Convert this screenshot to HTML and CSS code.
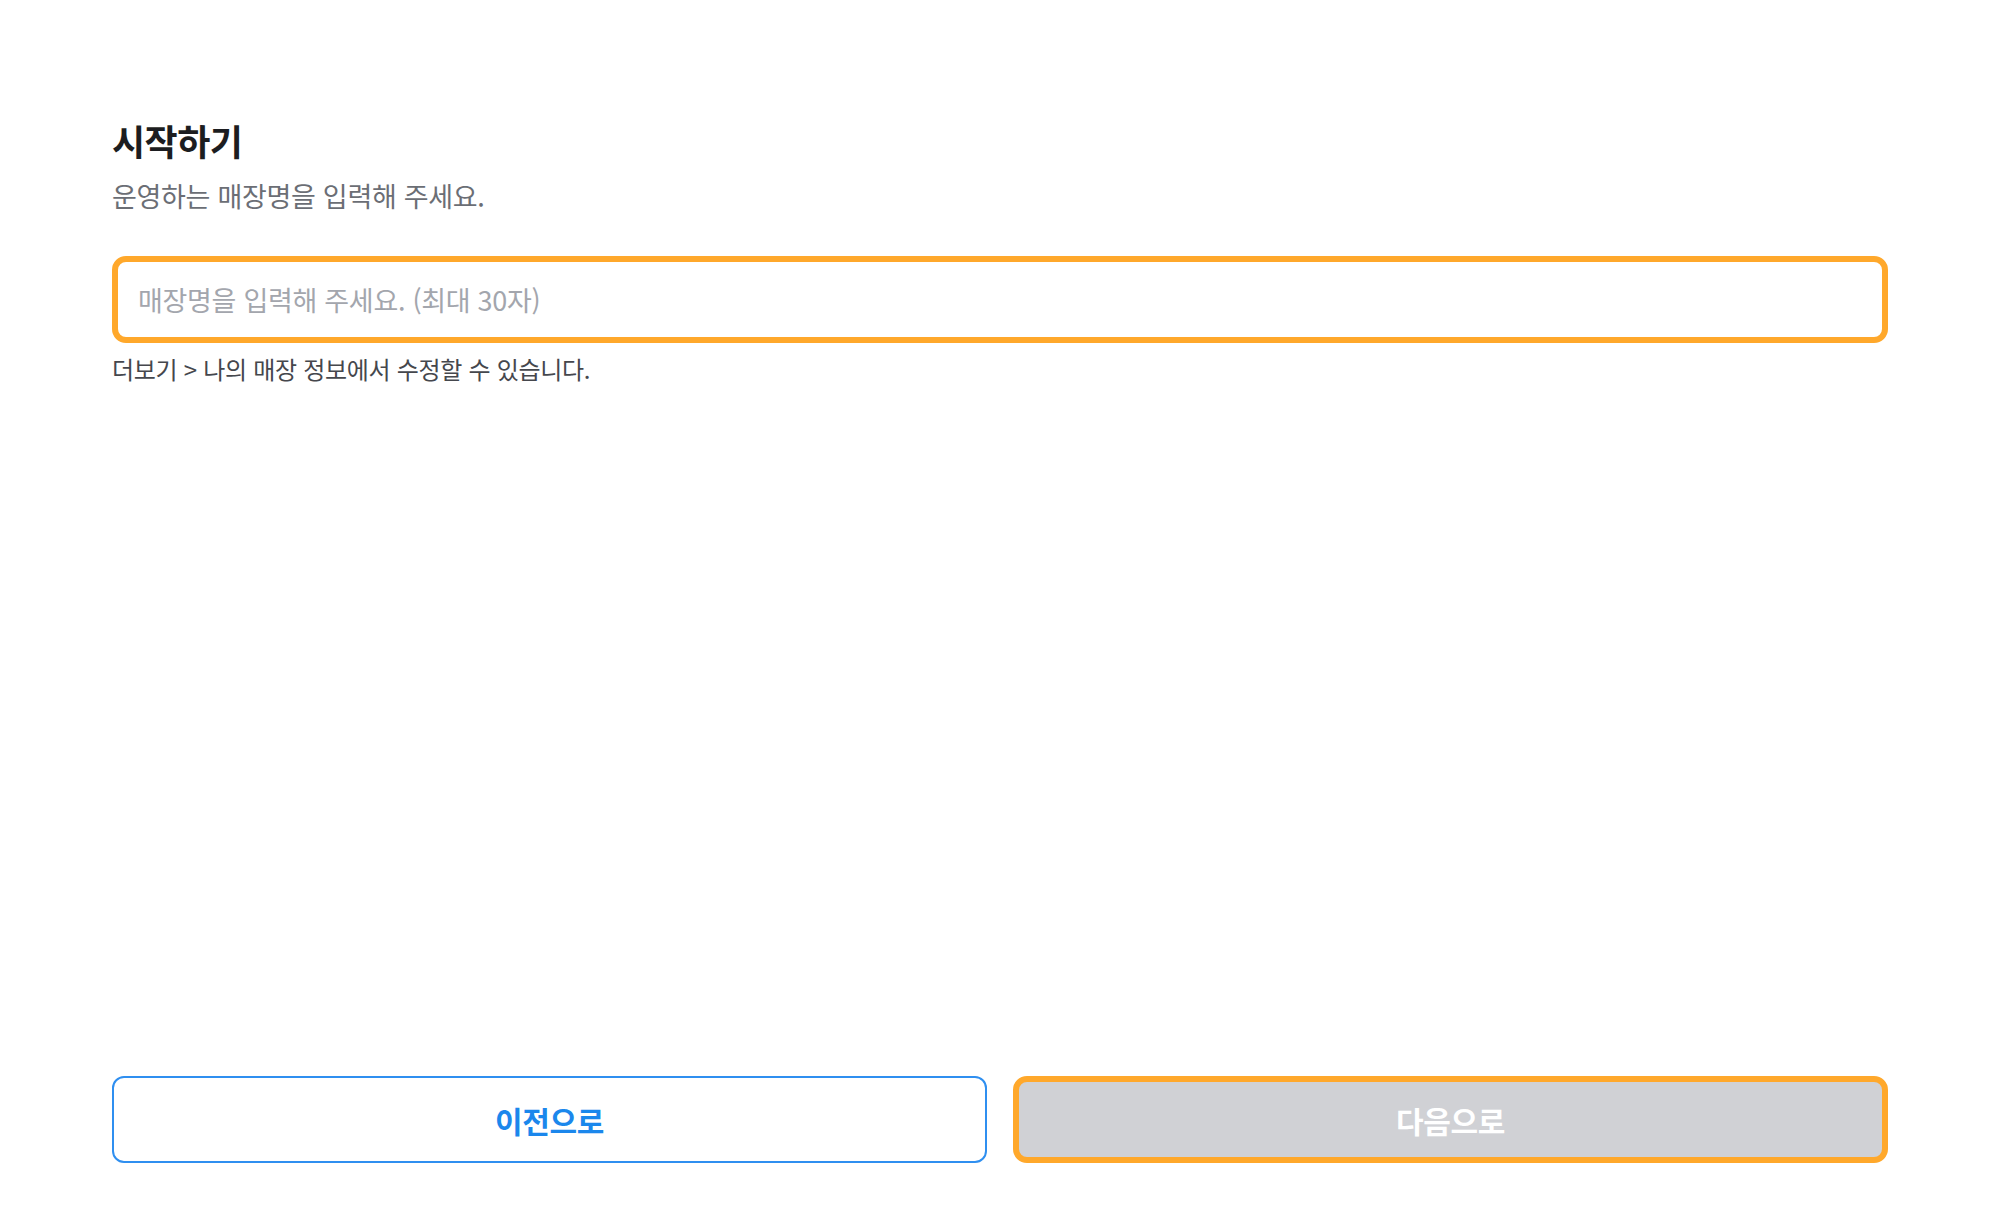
FILE: index.html
```html
<!DOCTYPE html>
<html lang="ko">
<head>
<meta charset="utf-8">
<title>시작하기</title>
<link rel="stylesheet" href="styles.css">
</head>
<body>
<main class="page">
  <section class="content">
    <h1 class="title">시작하기</h1>
    <p class="subtitle">운영하는 매장명을 입력해 주세요.</p>
    <div class="field">
      <input class="input" type="text" placeholder="매장명을 입력해 주세요. (최대 30자)">
    </div>
    <p class="helper">더보기 &gt; 나의 매장 정보에서 수정할 수 있습니다.</p>
  </section>
  <footer class="actions">
    <button class="btn btn-prev" type="button">이전으로</button>
    <button class="btn btn-next" type="button">다음으로</button>
  </footer>
</main>
</body>
</html>
```

FILE: styles.css
```css
* { box-sizing: border-box; }
html, body { margin: 0; height: 100%; background: #ffffff; }
body {
  font-family: "Noto Sans CJK KR", "Noto Sans", sans-serif;
  color: #1f2024;
}
.page {
  height: 100vh;
  display: flex;
  flex-direction: column;
  justify-content: space-between;
  padding: 115px 112px 50px;
}
.content { display: flex; flex-direction: column; }
.title {
  margin: 0;
  font-size: 36px;
  font-weight: 700;
  line-height: 50px;
  color: #1c1d20;
  letter-spacing: -0.5px;
}
.subtitle {
  margin: 12px 0 0;
  font-size: 27px;
  line-height: 38px;
  color: #6b6e75;
  letter-spacing: -0.3px;
}
.field { margin-top: 41px; }
.input {
  display: block;
  width: 100%;
  height: 87px;
  border: 6px solid #ffa82b;
  border-radius: 14px;
  padding: 0 20px;
  font-family: inherit;
  font-size: 27px;
  color: #1f2024;
  background: #fff;
  outline: none;
  letter-spacing: -0.3px;
}
.input::placeholder { color: #a3a6ad; }
.helper {
  margin: 9px 0 0;
  font-size: 24px;
  line-height: 34px;
  color: #45474d;
  letter-spacing: -0.3px;
}
.actions {
  display: grid;
  grid-template-columns: 1fr 1fr;
  gap: 26px;
}
.btn {
  height: 87px;
  border-radius: 12px;
  font-family: inherit;
  font-size: 30px;
  font-weight: 700;
  letter-spacing: -0.3px;
  cursor: pointer;
}
.btn-prev {
  background: #fff;
  border: 2px solid #2f8ff0;
  color: #1b87ec;
}
.btn-next {
  background: #d0d1d5;
  border: 6px solid #ffa82b;
  border-radius: 14px;
  color: #ffffff;
}
```
